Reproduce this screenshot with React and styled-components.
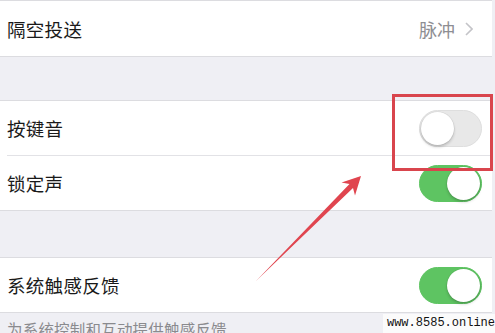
import React from "react";
import styled, { createGlobalStyle } from "styled-components";

const Global = createGlobalStyle`
  html, body {
    margin: 0;
    padding: 0;
    background: #efeff4;
    overflow: hidden;
  }
`;

const Screen = styled.div`
  position: relative;
  width: 495px;
  height: 333px;
  overflow: hidden;
  background: #efeff4;
  font-family: "Noto Sans CJK SC", "Noto Sans", sans-serif;
  color: #1a1a1a;
`;

const Group = styled.div`
  width: 492px;
  background: #fff;
  border-top: 1px solid #dcdce0;
  border-bottom: 1px solid #dcdce0;
  margin-top: ${(p) => p.gap || 0}px;
`;

const Row = styled.div`
  position: relative;
  height: ${(p) => p.h || 55}px;
  display: flex;
  align-items: center;
  justify-content: space-between;
  padding: 0 12px 0 7px;
  box-sizing: border-box;
  border-bottom: ${(p) => (p.divider ? "1px solid #e2e2e6" : "none")};
  margin-left: ${(p) => (p.divider ? 7 : 0)}px;
  padding-left: ${(p) => (p.divider ? 0 : 7)}px;
`;

const Label = styled.span`
  font-size: 18.5px;
  letter-spacing: 0.3px;
`;

const Detail = styled.span`
  display: flex;
  align-items: center;
  gap: 10px;
  font-size: 18px;
  color: #8e8e93;
  padding-right: 7px;
`;

const Switch = styled.div`
  position: relative;
  width: 63px;
  height: 37px;
  border-radius: 19px;
  box-sizing: border-box;
  margin-right: -2px;
  background: ${(p) => (p.on ? "#5ec462" : "#e8e8e8")};
  border: 1px solid ${(p) => (p.on ? "#5ec462" : "#dedede")};
  &::after {
    content: "";
    position: absolute;
    top: 1px;
    left: ${(p) => (p.on ? "27px" : "1px")};
    width: 33px;
    height: 33px;
    border-radius: 50%;
    background: #fff;
    box-shadow: 0 2px 3px rgba(0, 0, 0, 0.2), 0 0 0 0.5px rgba(0, 0, 0, 0.08);
  }
`;

const Footer = styled.div`
  padding: 5px 7px 0;
  font-size: 15.5px;
  color: #8a8a8e;
  letter-spacing: 0.2px;
`;

const Highlight = styled.div`
  position: absolute;
  left: 392px;
  top: 94px;
  width: 101px;
  height: 77px;
  box-sizing: border-box;
  border: 3px solid #d9454d;
`;

const Arrow = styled.svg`
  position: absolute;
  left: 0;
  top: 0;
  pointer-events: none;
`;

const Watermark = styled.div`
  position: absolute;
  right: 0;
  bottom: 0;
  height: 19px;
  padding: 0 0 0 4px;
  background: #fbfbfb;
  font-family: "Liberation Mono", monospace;
  font-size: 12px;
  line-height: 19px;
  color: #111;
`;

const Chevron = () => (
  <svg width="8" height="14" viewBox="0 0 8 14">
    <path d="M1 1l6 6-6 6" fill="none" stroke="#c4c4c8" strokeWidth="1.6" />
  </svg>
);

export default function App() {
  return (
    <Screen>
      <Global />
      <Group>
        <Row>
          <Label>隔空投送</Label>
          <Detail>
            脉冲
            <Chevron />
          </Detail>
        </Row>
      </Group>
      <Group gap={43}>
        <Row divider>
          <Label>按键音</Label>
          <Switch />
        </Row>
        <Row h={54}>
          <Label>锁定声</Label>
          <Switch on />
        </Row>
      </Group>
      <Group gap={46}>
        <Row h={54}>
          <Label>系统触感反馈</Label>
          <Switch on />
        </Row>
      </Group>
      <Footer>为系统控制和互动提供触感反馈</Footer>
      <Highlight />
      <Arrow width="495" height="333" viewBox="0 0 495 333">
        <polygon
          points="256,281 349.5,184 341.5,182.5 361,176 355,195.5 353,188"
          fill="#e0454f"
        />
      </Arrow>
      <Watermark>www.8585.online</Watermark>
    </Screen>
  );
}
